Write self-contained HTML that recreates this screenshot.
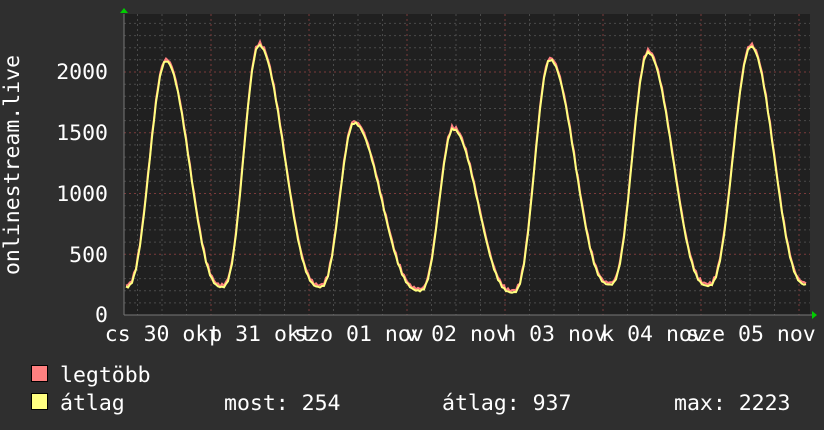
<!DOCTYPE html>
<html><head><meta charset="utf-8"><style>
html,body{margin:0;padding:0;background:#2f2f2f;width:824px;height:430px;overflow:hidden}
svg{display:block}
text{font-family:"DejaVu Sans Mono","Liberation Mono",monospace;font-size:21.5px;fill:#fff}
</style></head><body>
<svg id="s" width="824" height="430" xmlns="http://www.w3.org/2000/svg">
<rect x="0" y="0" width="824" height="430" fill="#2f2f2f"/>
<rect x="124" y="14" width="686" height="301" fill="#202020"/>
<g id="grid"></g>
<path id="pk" fill="none" stroke="#ff8080" stroke-width="2"/>
<path id="yl" fill="none" stroke="#ffff80" stroke-width="2"/>
<line x1="124" y1="315" x2="812" y2="315" stroke="#777" stroke-width="1"/>
<line x1="124" y1="14" x2="124" y2="315" stroke="#777" stroke-width="1"/>
<polygon points="812,311 812,319 817,315" fill="#00cc00"/>
<polygon points="120,13 128,13 124,8" fill="#00cc00"/>
<text x="108" y="79" text-anchor="end">2000</text>
<text x="108" y="140" text-anchor="end">1500</text>
<text x="108" y="201" text-anchor="end">1000</text>
<text x="108" y="262" text-anchor="end">500</text>
<text x="108" y="322" text-anchor="end">0</text>
<text transform="translate(19,165) rotate(-90)" text-anchor="middle">onlinestream.live</text>
<text x="163" y="341" text-anchor="middle">cs 30 okt</text>
<text x="261" y="341" text-anchor="middle">p 31 okt</text>
<text x="359" y="341" text-anchor="middle">szo 01 nov</text>
<text x="457" y="341" text-anchor="middle">v 02 nov</text>
<text x="555" y="341" text-anchor="middle">h 03 nov</text>
<text x="653" y="341" text-anchor="middle">k 04 nov</text>
<text x="751" y="341" text-anchor="middle">sze 05 nov</text>
<rect x="31.5" y="365.5" width="16" height="16" fill="#ff8080" stroke="#000"/>
<rect x="31.5" y="393.5" width="16" height="16" fill="#ffff80" stroke="#000"/>
<text x="60" y="382">legtöbb</text>
<text x="60" y="410">átlag</text>
<text x="224" y="410">most: 254</text>
<text x="442" y="410">átlag: 937</text>
<text x="674" y="410">max: 2223</text>
</svg>
<script>
var g=document.getElementById('grid'),h='';
function Y(v){return 315-v*0.1215;}
for(var v=100;v<=2400;v+=100){var y=Y(v).toFixed(1);var maj=v%500==0;
h+='<line x1="124" x2="810" y1="'+y+'" y2="'+y+'" stroke="'+(maj?'#7a3a3a':'#4a4a4a')+'" stroke-dasharray="2,3"/>';}
for(var x=113;x<810;x+=24.5){if(x<125)continue;var maj=Math.abs(((x-211)/98)-Math.round((x-211)/98))<0.01;
h+='<line y1="14" y2="315" x1="'+x.toFixed(1)+'" x2="'+x.toFixed(1)+'" stroke="'+(maj?'#7a3a3a':'#4a4a4a')+'" stroke-dasharray="2,3"/>';}
g.innerHTML=h;
var k=[[126,230],[166,2090],[222,230],[259,2220],[320,230],[354,1580],[420,200],[453,1530],[513,185],[550,2100],[610,250],[648,2160],[708,240],[751,2210],[806,250]];
function val(x){for(var i=0;i<k.length-1;i++){var a=k[i],b=k[i+1];if(x>=a[0]&&x<=b[0]){var t=(x-a[0])/(b[0]-a[0]);var e=(1-Math.cos(Math.PI*t))/2;
if(a[1]<b[1]){e=Math.pow(e,1.3);}else{e=1-Math.pow(1-e,1.3);}return a[1]+(b[1]-a[1])*e;}}return 250;}
var p='',q='';
for(var x=126;x<=807;x+=2){var v=val(x)+Math.sin(x*1.7)*8;var v2=v+Math.abs(Math.sin(x*0.9))*25;
p+=(x==126?'M':'L')+x+','+Y(v).toFixed(1);q+=(x==126?'M':'L')+x+','+Y(v2).toFixed(1);}
document.getElementById('yl').setAttribute('d',p);document.getElementById('pk').setAttribute('d',q);
</script>
</body></html>
